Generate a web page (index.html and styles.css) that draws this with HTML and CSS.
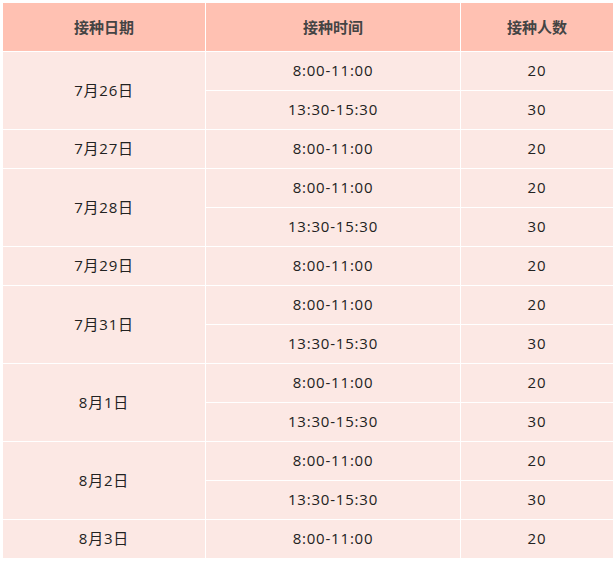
FILE: index.html
```html
<!DOCTYPE html>
<html lang="zh">
<head>
<meta charset="utf-8">
<title>接种安排</title>
<link rel="stylesheet" href="styles.css">
</head>
<body>
<table class="schedule">
  <colgroup>
    <col class="c-date">
    <col class="c-time">
    <col class="c-num">
  </colgroup>
  <thead>
    <tr><th>接种日期</th><th>接种时间</th><th>接种人数</th></tr>
  </thead>
  <tbody>
    <tr><td rowspan="2">7月26日</td><td>8:00-11:00</td><td>20</td></tr>
    <tr><td>13:30-15:30</td><td>30</td></tr>
    <tr><td>7月27日</td><td>8:00-11:00</td><td>20</td></tr>
    <tr><td rowspan="2">7月28日</td><td>8:00-11:00</td><td>20</td></tr>
    <tr><td>13:30-15:30</td><td>30</td></tr>
    <tr><td>7月29日</td><td>8:00-11:00</td><td>20</td></tr>
    <tr><td rowspan="2">7月31日</td><td>8:00-11:00</td><td>20</td></tr>
    <tr><td>13:30-15:30</td><td>30</td></tr>
    <tr><td rowspan="2">8月1日</td><td>8:00-11:00</td><td>20</td></tr>
    <tr><td>13:30-15:30</td><td>30</td></tr>
    <tr><td rowspan="2">8月2日</td><td>8:00-11:00</td><td>20</td></tr>
    <tr><td>13:30-15:30</td><td>30</td></tr>
    <tr><td>8月3日</td><td>8:00-11:00</td><td>20</td></tr>
  </tbody>
</table>
</body>
</html>
```
FILE: styles.css
```css
html, body {
  background: #ffffff;
}
body {
  margin: 2px;
  font-family: "Open Sans", "Noto Sans CJK SC", sans-serif;
  font-size: 15px;
  color: #222222;
}
.schedule {
  border-collapse: separate;
  border-spacing: 1px;
  background: #ffffff;
  table-layout: fixed;
  width: 612px;
}
.c-date { width: 202px; }
.c-time { width: 254px; }
.c-num { width: 152px; }
.schedule th,
.schedule td {
  padding: 0;
  text-align: center;
  vertical-align: middle;
  line-height: 20px;
}
.schedule th {
  height: 48px;
  background: #ffc1b2;
  color: #444444;
  font-weight: bold;
}
.schedule td {
  height: 36px;
  padding-bottom: 2px;
  background: #fce8e4;
  letter-spacing: 0.8px;
}
```
